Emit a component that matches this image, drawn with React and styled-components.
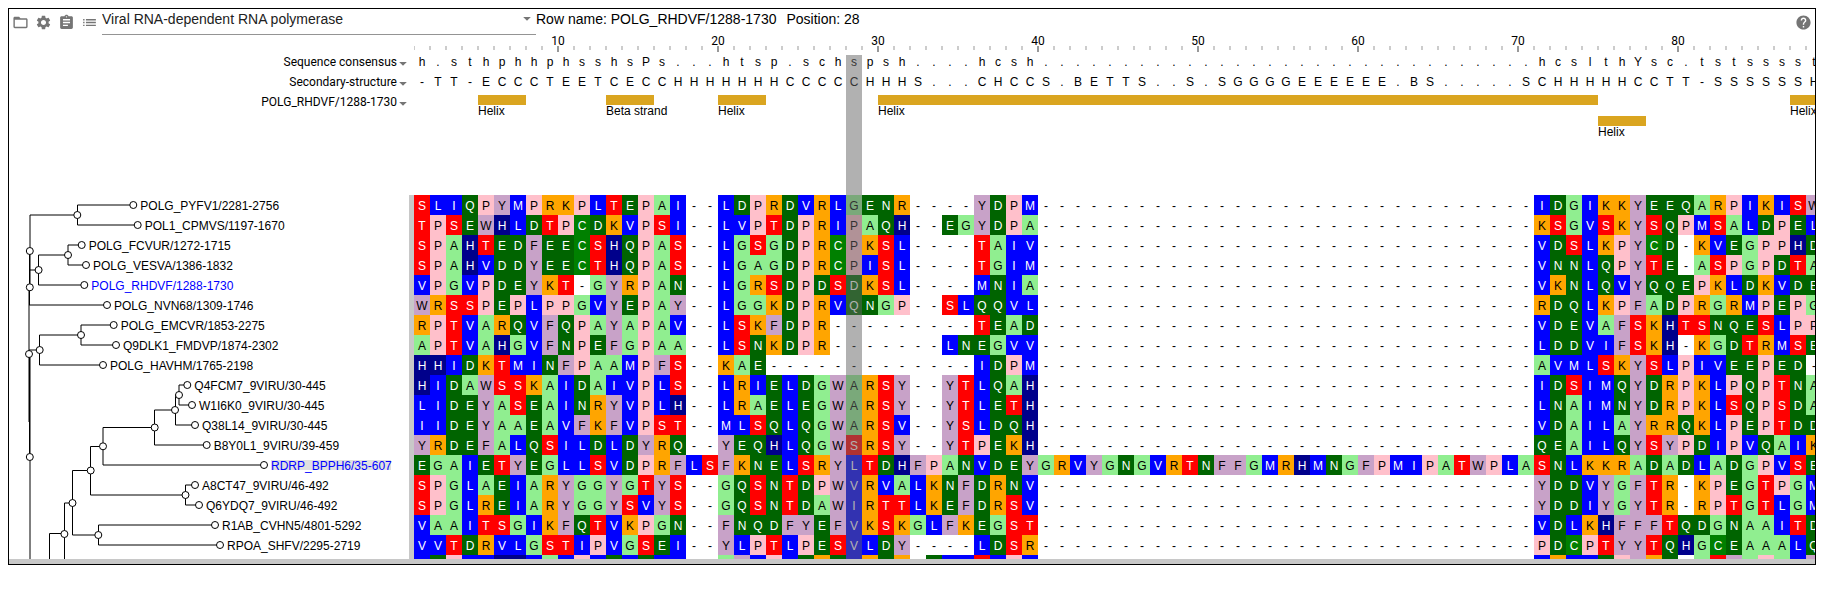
import React from "react";
import styled, { createGlobalStyle, css } from "styled-components";
import { MdFolderOpen, MdSettings, MdAssignment, MdList, MdHelp } from "react-icons/md";

const COL = 16;
const ROW = 20;
const SIDE = 405;
const DIVIDER = 5;
const ACTIVE_POSITION = 28;

const COLUMN_GAP = "-".repeat(31);

const sequences = [
  "SLIQPYMPRKPLTEPAI--LDPRDVRLGENR----YDPM" + COLUMN_GAP + "IDGIKKYEEQARPIKISW",
  "TPSEWHLDTPCDKVPSI--LVPTDPRIPAQH--EGYDPA" + COLUMN_GAP + "KSGVSKYSQPMSALDPEL",
  "SPAHTEDFEECSHQPAS--LGSGDPRCPKSL----TAIV" + COLUMN_GAP + "VDSLKPYCD-KVEGPPHD",
  "SPAHVDDYEECTHQPAS--LGAGDPRCPISL----TGIM" + COLUMN_GAP + "VNNLQPYTE-ASPGPDTA",
  "VPGVPDEYKT-GYRPAN--LGRSDPDSDKSL----MNIA" + COLUMN_GAP + "VKNLQVYQQEPKLDKVDE",
  "WRSSPEPLPPGVYEPAY--LGGKDPRVQNGP--SLQQVL" + COLUMN_GAP + "RDQLKPFADPRGRMPEPG",
  "RPTVARQVFQPAYAPAV--LSKFDPR---------TEAD" + COLUMN_GAP + "VDEVAFSKHTSNQESLPP",
  "APTVAHGVFNPEFGPAA--LSNKDPR-------LNEGVV" + COLUMN_GAP + "LDDVIFSKH-KGDTRMSE",
  "HHIDKTMINFPAAMPFS--KAE-------------IDPM" + COLUMN_GAP + "AVMLSKYSLPIVEEPED-",
  "HIDAWSSKAIDAIVPLS--LRIELDGWARSY--YTLQAH" + COLUMN_GAP + "IDSIMQYDRPKLPQPTNA",
  "LIDEYASEAINRYVPLH--LRAELEGWARSY--YTLETH" + COLUMN_GAP + "LNAIMNYDRPKLSQPSDA",
  "IIDEYAAEAVFKFVPST--MLSQLQGWARSV--YSLDQH" + COLUMN_GAP + "VDAILAYRRQKLPEPTDD",
  "YRDEFALQSILDLDYRQ--YEQHLQGWSRSY--YTPEKH" + COLUMN_GAP + "QEAILQYSYPDIPVQAIK",
  "EGAIETYEGLLSVDPRFLSFKNELSRYLTDHFPANVDEYGRVYGNGVRTNFFGMRHMNGFPMIPATWPLASNLKKRADADLADGPVSE",
  "SPGLAEIARYGGYGTYS--GQSNTDPWVRVALKNFDRNV" + COLUMN_GAP + "YDDVYGFTR-KPEGTPGM",
  "SPGLREIARYGGYSVYS--GQSNTDAWIRTTLKEFDRSV" + COLUMN_GAP + "YDDIYGYTR-RPTGTLGM",
  "VAAITSGIKFQTVKPGN--FNQDFYEFVKSKGLFKEGST" + COLUMN_GAP + "VDLKHFFFTQDGNAAITD",
  "VVTDRVLGSTIPVGSEI--YLPTLPESVLDY----LDSR" + COLUMN_GAP + "PDCPTYYTQHGCEAAALQ",
  "VEPVVHHVAVPVEVEVV--AYVPVEKEVKEK-EVVSVPV" + COLUMN_GAP + "VKVVEPYKE-ASYAPAVY",
];

const consensus =
  "h.sthphhphsshsPs...htsp.schspsh....hcsh" + ".".repeat(31) + "hcslthYsc.tstsssst";
const secondary =
  "-TT-ECCCTEETCECCHHHHHHHCCCCCHHHS...CHCCS.BETTS..S.SGGGGEEEEEE.BS.....SCHHHHHCCTT-SSSSSSH";

const features = [
  { name: "Helix", start: 5, length: 3, lane: 1 },
  { name: "Beta strand", start: 13, length: 3, lane: 1 },
  { name: "Helix", start: 20, length: 3, lane: 1 },
  { name: "Helix", start: 30, length: 45, lane: 1 },
  { name: "Helix", start: 75, length: 3, lane: 2 },
  { name: "Helix", start: 87, length: 2, lane: 1 },
];

const palette = {};
const paint = (letters, bg, fg) =>
  letters.split("").forEach((l) => {
    palette[l] = { bg, fg };
  });
paint("AG", "#90ee90", "#000");
paint("C", "#008000", "#fff");
paint("DENQ", "#006400", "#fff");
paint("ILMV", "#0000ff", "#fff");
paint("FWY", "#c8a2c8", "#000");
paint("H", "#00008b", "#fff");
paint("KR", "#ffa500", "#000");
paint("P", "#ffc0cb", "#000");
paint("ST", "#ff0000", "#fff");
const GAP_STYLE = { bg: "transparent", fg: "#000" };

const leaves = [
  { x: 124.3, name: "POLG_PYFV1/2281-2756" },
  { x: 128.7, name: "POL1_CPMVS/1197-1670" },
  { x: 72.7, name: "POLG_FCVUR/1272-1715" },
  { x: 77, name: "POLG_VESVA/1386-1832" },
  { x: 75.3, name: "POLG_RHDVF/1288-1730", active: true },
  { x: 98, name: "POLG_NVN68/1309-1746" },
  { x: 104.7, name: "POLG_EMCVR/1853-2275" },
  { x: 107, name: "Q9DLK1_FMDVP/1874-2302" },
  { x: 94, name: "POLG_HAVHM/1765-2198" },
  { x: 178.3, name: "Q4FCM7_9VIRU/30-445" },
  { x: 183, name: "W1I6K0_9VIRU/30-445" },
  { x: 186, name: "Q38L14_9VIRU/30-445" },
  { x: 197.7, name: "B8Y0L1_9VIRU/39-459" },
  { x: 255, name: "RDRP_BPPH6/35-607", active: true, hovered: true },
  { x: 186, name: "A8CT47_9VIRU/46-492" },
  { x: 190, name: "Q6YDQ7_9VIRU/46-492" },
  { x: 206, name: "R1AB_CVHN5/4801-5292" },
  { x: 211, name: "RPOA_SHFV/2295-2719" },
];

const branches = [
  "M68.5 10V30M68.5 10H124M68.5 30H128",
  "M59 50V70M59 50H72M59 70H77",
  "M29.5 60V90M29.5 60H59M29.5 90H75",
  "M21 20V92M21 20H68M21 75H29",
  "M20.5 56V110M20 110H98",
  "M72 130V150M72 130H104M72 150H107",
  "M30.5 140V170M30.5 140H72M30.5 170H94",
  "M20 92V227M20 155H30",
  "M21 159V370",
  "M20.5 159V262",
  "M170 190V210M170 190H178M170 210H183",
  "M166.5 200V230M166.5 200H170M166.5 230H186",
  "M145.5 215V250M145.5 215H166M145.5 250H197",
  "M94 232.5V270M94 232.5H145M94 270H255",
  "M81.5 251.5V300M81.5 251.5H94M81.5 300H176",
  "M176.5 290V310M176.5 290H186M176.5 310H190",
  "M63.5 275.5V340M63.5 275.5H81M63.5 340H89",
  "M89.5 330V350M89.5 330H206M89.5 350H211",
  "M55.5 308V370M55.5 308H63",
  "M40.5 338.5V370M40.5 338.5H55",
];

const joints = [
  [68.3, 20], [59, 60], [29.6, 75], [20.8, 56], [20.8, 92.3], [20, 159], [20.8, 262],
  [72, 140], [30.7, 155], [170, 200], [166, 215], [145.7, 232.5], [94, 251.3],
  [81.7, 275.5], [176.5, 300], [63.5, 308], [89.3, 340], [55.4, 339],
];

const GlobalStyle = createGlobalStyle`
  body {
    margin: 0;
    background: #fff;
    font-family: "Liberation Sans", Arial, sans-serif;
    color: #000;
  }
`;

const Viewer = styled.main`
  margin: 8px 13px 27px 8px;
  border: 1px solid #000;
  overflow: hidden;
`;

const Toolbar = styled.header`
  display: flex;
  align-items: flex-start;
  height: 26px;
  font-size: 14px;
  line-height: 16px;
`;

const IconButton = styled.button`
  display: flex;
  margin: 2px 0 0;
  padding: 3px;
  border: 0;
  background: none;
  color: #757575;
  font-size: 17px;
  cursor: pointer;
`;

const DatasetField = styled.label`
  position: relative;
  display: flex;
  width: 434px;
  margin-left: 1px;
  border-bottom: 1px solid #949494;
`;

const DatasetSelect = styled.select`
  flex: 1;
  height: 25px;
  padding: 0 24px 6px 0;
  border: 0;
  appearance: none;
  background: none;
  color: #212121;
  font: inherit;
`;

const Caret = styled.svg`
  display: block;
  width: 8px;
  height: 4px;
  fill: #757575;
`;

const FieldCaret = styled(Caret)`
  position: absolute;
  right: 5px;
  top: 8px;
  pointer-events: none;
`;

const Status = styled.p`
  display: flex;
  flex: 1;
  gap: 10px;
  margin: 0;
  padding-top: 2px;
`;

const Body = styled.div`
  display: flex;
`;

const Side = styled.section`
  flex: 0 0 ${SIDE}px;
`;

const TrackLabels = styled.div`
  box-sizing: border-box;
  height: 160px;
  padding-top: 17px;
`;

const TrackLabel = styled.div`
  display: flex;
  align-items: center;
  justify-content: flex-end;
  gap: 2px;
  height: ${ROW}px;
  padding-right: 7px;
  font-family: Roboto, sans-serif;
  font-size: 12px;
`;

const TrackButton = styled.button`
  padding: 3px 0 0;
  border: 0;
  background: none;
  cursor: pointer;
`;

const TreePanel = styled.div`
  height: 364px;
  border-right: ${DIVIDER}px solid #c8c8c8;
`;

const TreeDrawing = styled.svg`
  display: block;
  width: 100%;
  height: 100%;
  font-size: 12px;

  path {
    fill: none;
    stroke: #000;
  }

  circle {
    fill: #fff;
    stroke: #000;
  }
`;

const Main = styled.section`
  position: relative;
  flex: 1;
  min-width: 0;
  overflow: hidden;
`;

const Ruler = styled.div`
  display: grid;
  grid-template-columns: repeat(88, ${COL}px);
  height: 17px;
`;

const Tick = styled.div`
  display: flex;
  align-items: flex-end;
  justify-content: center;
  width: 2px;
  height: ${(p) => (p.$major ? 6 : 4)}px;
  margin: 11px 0 0 -1px;
  background: ${(p) => (p.$major ? "#999" : "#ccc")};
`;

const TickLabel = styled.span`
  margin-bottom: 5px;
  font-family: Roboto, sans-serif;
  font-size: 12px;
  line-height: 12px;
`;

const ResidueRow = styled.div`
  display: flex;
  height: ${ROW}px;
  font-size: 12px;
  line-height: ${(p) => (p.$colored ? 22 : 20)}px;
`;

const Residue = styled.span`
  flex: 0 0 ${COL}px;
  text-align: center;
  ${(p) =>
    p.$paint &&
    css`
      background: ${p.$paint.bg};
      color: ${p.$paint.fg};
    `}
`;

const FeatureTrack = styled.div`
  display: grid;
  grid-template-columns: repeat(88, ${COL}px);
  grid-template-rows: 21px 21px;
  height: 103px;
  padding-top: 3px;
  box-sizing: border-box;
`;

const Feature = styled.div`
  grid-row: ${(p) => p.$lane};
  grid-column: ${(p) => p.$start} / span ${(p) => p.$length};
  padding-top: 10px;
  background: linear-gradient(#daa520, #daa520) top / 100% 10px no-repeat;
  font-size: 12px;
  line-height: 12px;
  white-space: nowrap;
`;

const Alignment = styled.div`
  height: 364px;
  overflow: hidden;
`;

const PositionMarker = styled.div`
  position: absolute;
  top: 20px;
  bottom: 0;
  left: ${(ACTIVE_POSITION - 1) * COL}px;
  width: ${COL}px;
  background: rgba(100, 100, 100, 0.5);
  pointer-events: none;
`;

const ResizeHandle = styled.div`
  height: 5px;
  background: #c8c8c8;
`;

function CaretIcon({ as: Shape = Caret }) {
  return (
    <Shape viewBox="0 0 8 4" aria-hidden="true">
      <path d="M0.2 0H7.8L4 3.8Z" />
    </Shape>
  );
}

function Tree() {
  return (
    <TreeDrawing role="img" aria-label="Phylogenetic tree">
      {branches.map((d) => (
        <path key={d} d={d} />
      ))}
      {joints.map(([x, y]) => (
        <circle key={`${x}-${y}`} cx={x} cy={y} r="3.5" />
      ))}
      {leaves.map((leaf, i) => {
        const y = 10 + i * ROW;
        return (
          <g key={leaf.name}>
            <circle cx={leaf.x} cy={y} r="3.5" />
            {leaf.hovered && <rect x={leaf.x + 7} y={y - 5} width="120" height="10" fill="#e0e0e0" />}
            <text x={leaf.x + 7} y={y + 5} fill={leaf.active ? "#0000ff" : "#000"}>
              {leaf.name}
            </text>
          </g>
        );
      })}
    </TreeDrawing>
  );
}

function Track({ text, colored }) {
  return (
    <ResidueRow $colored={colored}>
      {text.split("").map((letter, i) => (
        <Residue key={i} $paint={colored ? palette[letter] || GAP_STYLE : undefined}>
          {letter}
        </Residue>
      ))}
    </ResidueRow>
  );
}

export default function App() {
  return (
    <>
      <GlobalStyle />
      <Viewer>
        <Toolbar>
          <IconButton aria-label="Open file"><MdFolderOpen /></IconButton>
          <IconButton aria-label="Settings"><MdSettings /></IconButton>
          <IconButton aria-label="Details"><MdAssignment /></IconButton>
          <IconButton aria-label="Tracks"><MdList /></IconButton>
          <DatasetField>
            <DatasetSelect aria-label="Alignment" defaultValue="rdrp">
              <option value="rdrp">Viral RNA-dependent RNA polymerase</option>
            </DatasetSelect>
            <CaretIcon as={FieldCaret} />
          </DatasetField>
          <Status>
            <span>Row name: POLG_RHDVF/1288-1730</span>
            <span>Position: {ACTIVE_POSITION}</span>
          </Status>
          <IconButton aria-label="Help"><MdHelp /></IconButton>
        </Toolbar>
        <Body>
          <Side>
            <TrackLabels>
              {["Sequence consensus", "Secondary-structure", "POLG_RHDVF/1288-1730"].map((name) => (
                <TrackLabel key={name}>
                  {name}
                  <TrackButton aria-label={`${name} menu`}><CaretIcon /></TrackButton>
                </TrackLabel>
              ))}
            </TrackLabels>
            <TreePanel>
              <Tree />
            </TreePanel>
          </Side>
          <Main>
            <Ruler>
              {sequences[0].split("").map((_, i) => {
                const major = (i + 1) % 10 === 0;
                return (
                  <Tick key={i} $major={major}>
                    {major && <TickLabel>{i + 1}</TickLabel>}
                  </Tick>
                );
              })}
            </Ruler>
            <Track text={consensus} />
            <Track text={secondary} />
            <FeatureTrack>
              {features.map((f) => (
                <Feature key={f.start} $start={f.start} $length={f.length} $lane={f.lane}>
                  {f.name}
                </Feature>
              ))}
            </FeatureTrack>
            <Alignment>
              {sequences.map((text, i) => (
                <Track key={i} text={text} colored />
              ))}
            </Alignment>
            <PositionMarker />
          </Main>
        </Body>
        <ResizeHandle />
      </Viewer>
    </>
  );
}
